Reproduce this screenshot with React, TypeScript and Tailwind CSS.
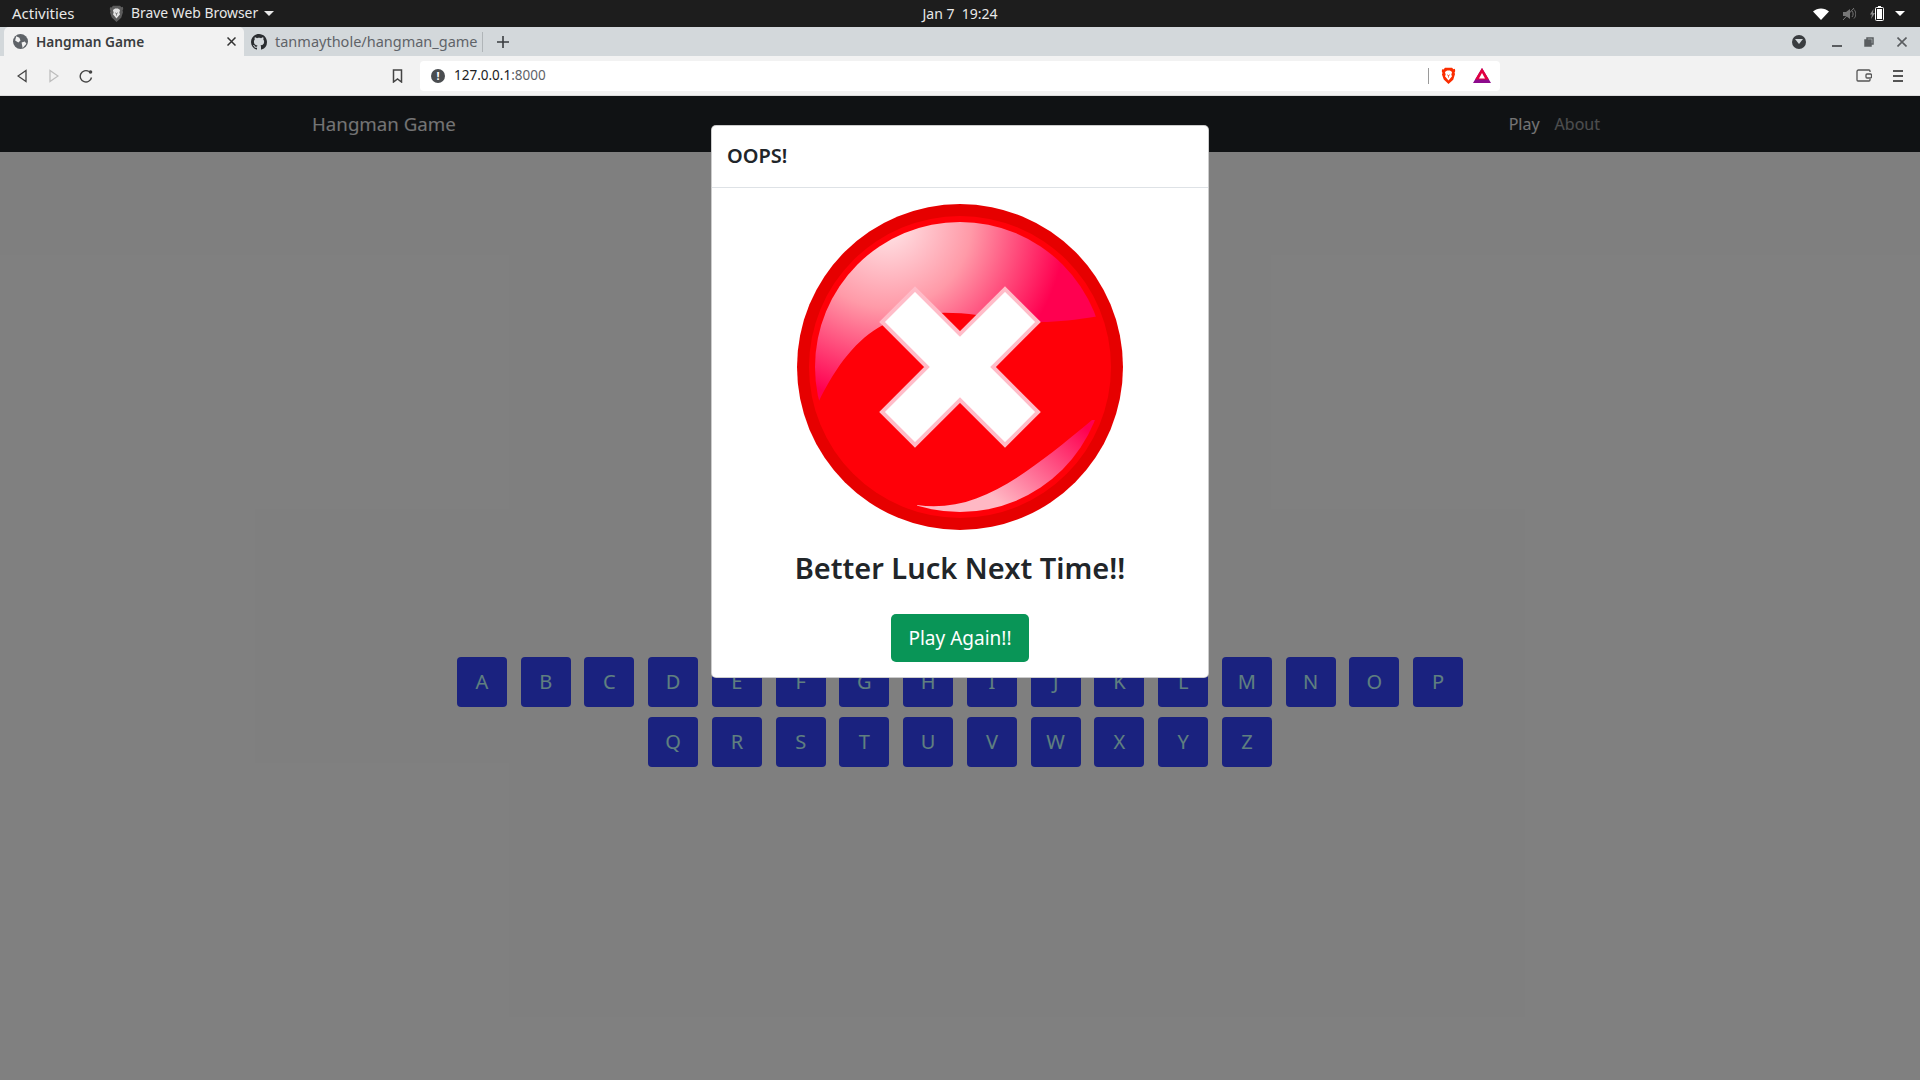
const uiFont = "font-['Noto_Sans','Open_Sans',sans-serif]";

const ROW_ONE = ['A', 'B', 'C', 'D', 'E', 'F', 'G', 'H', 'I', 'J', 'K', 'L', 'M', 'N', 'O', 'P'];
const ROW_TWO = ['Q', 'R', 'S', 'T', 'U', 'V', 'W', 'X', 'Y', 'Z'];

function BraveLion({ className, colour, face }: { className: string; colour: string; face: string }) {
  return (
    <svg viewBox="0 0 20 24" className={`${className} shrink-0`}>
      <path d="M5 1h10l2 2 2-.5.5 3-1 2.500.7 2-2.500 8L10 24l-6.700-6.500-2.500-7 .7-2-1-2.500.5-3 2 .5z" fill={colour} />
      <path d="M5 7l3-2h4l3 2-1 4 1 2-5 6-5-6 1-2z" fill={face} />
      <path d="M8 11l2 1 2-1M10 12v3" stroke={colour} strokeWidth="1" fill="none" />
    </svg>
  );
}

function TopBar() {
  return (
    <div className="flex h-[27px] items-center bg-[#1d1d1d] text-[#e8e8e8]">
      <div className="flex flex-1 items-center">
        <span className="ml-[12px] w-[97px] text-[15px]">Activities</span>
        <BraveLion className="h-[17px] w-[15px]" colour="#5c5c5c" face="#e4e4e4" />
        <span className="ml-[7px] text-[13.9px]">Brave Web Browser</span>
        <span className="ml-[6px] h-0 w-0 border-x-[5px] border-t-[5px] border-x-transparent border-t-[#e8e8e8]" />
      </div>
      <span className="text-[14px]">Jan 7&nbsp;&nbsp;19:24</span>
      {/* wifi, sound, battery */}
      <div className="flex flex-1 items-center justify-end">
        <svg viewBox="0 0 16 12" className="h-[12px] w-[16px]">
          <path d="M0 3.500C4.500-.500 11.500-.500 16 3.500L8 12z" fill="#ffffff" />
        </svg>
        <svg viewBox="0 0 14 14" className="ml-[13px] h-[14px] w-[14px]" fill="none">
          <path d="M1 5h3l4-3v10l-4-3H1z" fill="#777777" />
          <path d="M10 4c1.500 2 1.500 4 0 6M12 2.500c2.500 3 2.500 6 0 9" stroke="#777777" />
          <path d="M1 13L12 1" stroke="#777777" />
        </svg>
        <svg viewBox="0 0 5 10" className="ml-[14px] h-[10px] w-[5px]">
          <path d="M3.500 0L0 5.500h2L1 10l4-6H3z" fill="#8a8a8a" />
        </svg>
        <svg viewBox="0 0 9 15" className="h-[15px] w-[9px]">
          <rect x="0.500" y="1.500" width="8" height="13" rx="1" fill="none" stroke="#ffffff" />
          <rect x="2" y="3" width="5" height="10" fill="#ffffff" />
          <rect x="3" y="0" width="3" height="1.500" fill="#ffffff" />
        </svg>
        <span className="ml-[11px] mr-[15px] h-0 w-0 border-x-[5px] border-t-[5px] border-x-transparent border-t-[#ffffff]" />
      </div>
    </div>
  );
}

function TabStrip() {
  return (
    <div className="flex h-[29px] items-center bg-[#d3d8db]">
      <div className="ml-[4px] flex h-[29px] w-[240px] shrink-0 items-center rounded-t-[5px] bg-[#f2f2f2] pl-[9px] text-[#3a3d40]">
        <svg viewBox="0 0 14 14" className="h-[15px] w-[15px] shrink-0">
          <circle cx="7" cy="7" r="7" fill="#5f6368" />
          <path d="M3 2l3 1.500 1 2.500-2 2-3-2zM8 8l3-1 1.500 2L9 13z" fill="#f2f2f2" />
        </svg>
        <span className="ml-[8px] flex-1 pt-[1px] text-[13.7px] font-semibold">Hangman Game</span>
        <svg viewBox="0 0 9 9" className="mr-[8px] h-[9px] w-[9px]" stroke="#333333" strokeWidth="1.500">
          <path d="M.5 .5l8 8M8.500 .5l-8 8" />
        </svg>
      </div>
      <div className="flex h-[29px] w-[239px] shrink-0 items-center pl-[7px] text-[#5f6368]">
        <svg viewBox="0 0 16 16" className="h-[16px] w-[16px] shrink-0" fill="#2a2d30">
          <path d="M8 0C3.580 0 0 3.580 0 8c0 3.540 2.290 6.530 5.470 7.590.4.070.55-.17.55-.38 0-.19-.01-.82-.01-1.490-2.010.37-2.530-.49-2.690-.94-.09-.23-.48-.94-.82-1.130-.28-.15-.68-.52-.01-.53.630-.01 1.080.58 1.230.82.720 1.210 1.870.87 2.330.66.070-.52.280-.87.510-1.070-1.780-.2-3.640-.89-3.640-3.950 0-.87.310-1.590.82-2.150-.08-.2-.36-1.020.08-2.120 0 0 .67-.21 2.200.82.640-.18 1.320-.27 2-.27s1.360.09 2 .27c1.530-1.040 2.200-.82 2.200-.82.44 1.100.16 1.920.08 2.120.51.56.82 1.270.82 2.150 0 3.070-1.870 3.750-3.650 3.950.29.25.54.73.54 1.480 0 1.070-.01 1.930-.01 2.200 0 .21.15.46.55.38A8.013 8.013 0 0016 8c0-4.420-3.580-8-8-8z" />
        </svg>
        <span className="ml-[8px] flex-1 whitespace-nowrap text-[14.5px]">tanmaythole/hangman_game</span>
        <span className="h-[20px] w-px bg-[#b0b5b8]" />
      </div>
      <svg viewBox="0 0 12 12" className="ml-[14px] h-[12px] w-[12px]" stroke="#3a3d40" strokeWidth="1.600">
        <path d="M6 0v12M0 6h12" />
      </svg>
      <div className="ml-auto flex h-[29px] items-center">
        <span className="flex h-[14px] w-[14px] items-center justify-center rounded-full bg-[#3a3d40]">
          <span className="h-0 w-0 border-x-[4px] border-t-[5px] border-x-transparent border-t-[#d3d8db]" />
        </span>
        <span className="ml-[26px] mt-[8px] h-[2px] w-[10px] bg-[#5a5d60]" />
        <svg viewBox="0 0 10 10" className="ml-[22px] h-[10px] w-[10px]" fill="none" stroke="#5a5d60" strokeWidth="1.500">
          <path d="M3 3V1h6v6H7" />
          <rect x="1" y="3" width="6" height="6" fill="#5a5d60" />
        </svg>
        <svg viewBox="0 0 10 10" className="ml-[23px] mr-[13px] h-[10px] w-[10px]" stroke="#5a5d60" strokeWidth="1.600">
          <path d="M.5 .5l9 9M9.500 .5l-9 9" />
        </svg>
      </div>
    </div>
  );
}

function ToolBar() {
  return (
    <div className="flex h-[40px] items-center border-b border-[#dcdcdc] bg-[#f2f2f2]">
      <svg viewBox="0 0 10 14" className="ml-[17px] h-[14px] w-[10px]" fill="none" stroke="#444444" strokeWidth="1.300">
        <path d="M9 1.500v11L1 7z" />
      </svg>
      <svg viewBox="0 0 10 14" className="ml-[22px] h-[14px] w-[10px]" fill="none" stroke="#bdbdbd" strokeWidth="1.300">
        <path d="M1 1.500v11L9 7z" />
      </svg>
      <svg viewBox="0 0 14 14" className="ml-[20px] h-[14px] w-[14px]" fill="none" stroke="#444444" strokeWidth="1.400">
        <path d="M12.500 8.500A5.700 5.700 0 1 1 10 2.500" />
        <circle cx="11.500" cy="3" r="1.800" fill="#444444" stroke="none" />
      </svg>
      <svg viewBox="0 0 11 14" className="ml-[299px] h-[14px] w-[11px]" fill="none" stroke="#444444" strokeWidth="1.500">
        <path d="M1.500 1h8v12l-4-3-4 3z" />
      </svg>
      <div className="ml-[17px] flex h-[30px] w-[1080px] items-center rounded-[4px] bg-white">
        <span className="ml-[11px] flex h-[14px] w-[14px] items-center justify-center rounded-full bg-[#4a4d50] text-[11px] font-bold leading-none text-white">!</span>
        <span className="ml-[9px] text-[13.5px] text-[#202124]">127.0.0.1<span className="text-[#5f6368]">:8000</span></span>
        <span className="ml-auto h-[16px] w-px bg-[#9a9a9a]" />
        <BraveLion className="ml-[12px] h-[17px] w-[15px]" colour="#fb2d00" face="#ffffff" />
        <svg viewBox="0 0 18 15" className="ml-[17px] mr-[9px] h-[15px] w-[18px]">
          <path d="M9 0l9 15H0z" fill="#8c0a8c" />
          <path d="M9 0l6.800 11.500H2.200z" fill="#e3003f" />
          <path d="M9 5l3 5.500H6z" fill="#ffffff" />
        </svg>
      </div>
      <svg viewBox="0 0 16 13" className="ml-auto h-[13px] w-[16px]" fill="none" stroke="#555555" strokeWidth="1.300">
        <path d="M14 3V2a1 1 0 0 0-1-1H2.500A1.500 1.500 0 0 0 1 2.500V11a1 1 0 0 0 1 1h11a1 1 0 0 0 1-1v-1" />
        <rect x="10" y="5" width="5.500" height="4" rx="1" />
      </svg>
      <span className="ml-[21px] mr-[17px] flex w-[10px] flex-col gap-[3px]">
        <span className="h-[2px] bg-[#555555]" />
        <span className="h-[2px] bg-[#555555]" />
        <span className="h-[2px] bg-[#555555]" />
      </span>
    </div>
  );
}

function Key({ letter }: { letter: string }) {
  return (
    <button className="flex h-[50px] w-[50px] items-center justify-center rounded-[4px] bg-[#3445ff] text-[20px] text-[#c0ffff]">
      {letter}
    </button>
  );
}

function FailIcon() {
  return (
    <svg viewBox="0 0 326 326" className="h-[326px] w-[326px]">
      <defs>
        <radialGradient id="gloss" gradientUnits="userSpaceOnUse" cx="90" cy="20" r="210">
          <stop offset="0" stopColor="#ffe8ea" />
          <stop offset="0.4" stopColor="#ff9aa8" />
          <stop offset="0.85" stopColor="#ff0050" />
        </radialGradient>
        <linearGradient id="glossLow" gradientUnits="userSpaceOnUse" x1="290" y1="225" x2="215" y2="310">
          <stop offset="0" stopColor="#ff0050" />
          <stop offset="1" stopColor="#ffb8c4" />
        </linearGradient>
        <clipPath id="face">
          <circle cx="163" cy="163" r="145" />
        </clipPath>
      </defs>
      <circle cx="163" cy="163" r="163" fill="#e60000" />
      <circle cx="163" cy="163" r="151" fill="#ff0008" />
      <g clipPath="url(#face)">
        <path d="M21 199C40 160 60 135 86 121c20-12 60-15 94-10 25 4 45 8 70 7 20-1 35-3 60-7V0H0v199z" fill="url(#gloss)" />
        <path d="M120 301C180 310 230 270 295 216L326 216V326H120z" fill="url(#glossLow)" />
      </g>
      <path
        d="M163 130L118 85 85 118 130 163 85 208 118 241 163 196 208 241 241 208 196 163 241 118 208 85z"
        fill="#ffffff"
        stroke="#ffbcc8"
        strokeWidth="4"
      />
    </svg>
  );
}

export default function App() {
  return (
    <div className={`${uiFont} flex h-[1080px] w-[1920px] flex-col overflow-hidden bg-white`}>
      <TopBar />
      <TabStrip />
      <ToolBar />

      {/* page + modal backdrop */}
      <div className="relative flex-1">
        <nav className="flex h-[56px] items-center bg-[#212529] text-white/55">
          <span className="ml-[312px] text-[18.7px] text-white/90">Hangman Game</span>
          <span className="ml-auto text-[16px] text-white/90">Play</span>
          <span className="ml-[15px] mr-[320px] text-[16px]">About</span>
        </nav>
        <div className="flex flex-col items-center gap-[10px] pt-[505px]">
          <div className="flex gap-[13.75px]">
            {ROW_ONE.map(l => <Key key={l} letter={l} />)}
          </div>
          <div className="flex gap-[13.75px]">
            {ROW_TWO.map(l => <Key key={l} letter={l} />)}
          </div>
        </div>

        <div className="absolute inset-0 bg-black/50" />

        <div className="absolute left-[711px] top-[29px] flex h-[553px] w-[498px] flex-col rounded-[5px] border border-black/20 bg-white">
          <div className="flex h-[62px] items-center border-b border-[#dee2e6] px-[15px] pb-[2px] text-[20px] font-semibold text-[#212529]">
            OOPS!
          </div>
          <div className="flex flex-col items-center pt-[16px]">
            <FailIcon />
            <h2 className="mt-[18px] text-[29px] font-semibold leading-[40px] text-[#212529]">Better Luck Next Time!!</h2>
            <button className="mt-[26px] flex h-[48px] w-[138px] items-center justify-center rounded-[5px] bg-[#099557] text-[19px] text-white">
              Play Again!!
            </button>
          </div>
        </div>
      </div>
    </div>
  );
}
